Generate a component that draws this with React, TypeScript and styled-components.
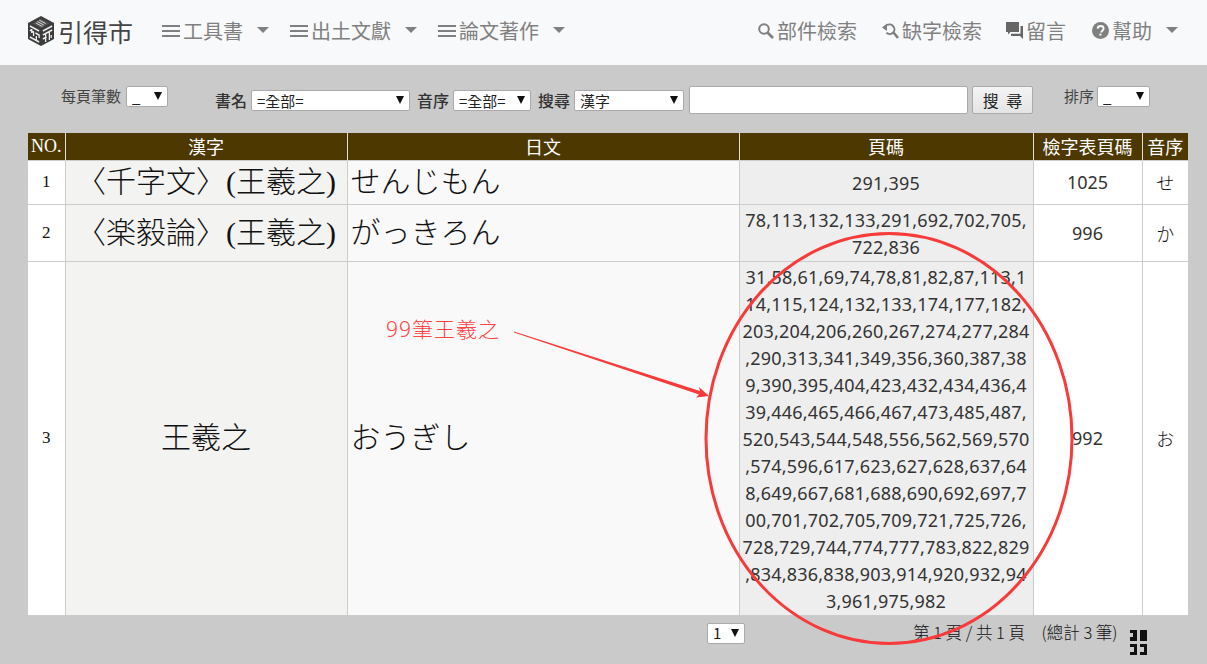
import styled, { createGlobalStyle } from "styled-components";

const GlobalStyle = createGlobalStyle`
	html, body {
		margin: 0;
		padding: 0;
		height: 664px;
		overflow: hidden;
		background: #cacaca;
		font-family: "Noto Sans CJK TC", "Liberation Serif", serif;
		text-spacing-trim: space-all;
	}
`;

const Page = styled.div`
	position: relative;
	width: 1207px;
	height: 664px;
`;

const Navbar = styled.nav`
	display: flex;
	align-items: center;
	height: 65px;
	padding: 0 29px 4px 28px;
	box-sizing: border-box;
	background: #f8f9fa;
`;

const Brand = styled.a`
	display: flex;
	align-items: center;
	gap: 4px;
	margin-right: 29px;
	font-size: 25px;
	color: #444;
`;

const NavItem = styled.a<{ $gap?: number }>`
	display: flex;
	align-items: center;
	gap: 3px;
	margin-right: ${(p) => p.$gap ?? 21}px;
	font-size: 20px;
	line-height: 30px;
	color: #808080;
`;

const NavRight = styled.div`
	display: flex;
	align-items: center;
	margin-left: auto;
`;

const Caret = styled.span`
	width: 0;
	height: 0;
	margin: 0 0 2px 11px;
	border-top: 6px solid #808080;
	border-left: 6px solid transparent;
	border-right: 6px solid transparent;
`;

const FilterBar = styled.form`
	display: flex;
	align-items: flex-start;
	height: 68px;
	padding: 21px 0 0 61px;
	box-sizing: border-box;
`;

const SmallLabel = styled.label<{ $left?: number; $right: number }>`
	margin: 0 ${(p) => p.$right}px 0 ${(p) => p.$left ?? 0}px;
	font-size: 15px;
	line-height: 20px;
	color: #444;
`;

const Label = styled.label<{ $left?: number }>`
	margin: 0 4px 0 ${(p) => p.$left ?? 7}px;
	font-size: 16px;
	line-height: 28px;
	font-weight: 500;
	color: #333;
`;

const SelectBox = styled.div<{ $w: number; $top?: number }>`
	position: relative;
	flex: none;
	width: ${(p) => p.$w}px;
	height: 21px;
	margin-top: ${(p) => p.$top ?? 0}px;
`;

const Select = styled.select`
	display: block;
	appearance: none;
	width: 100%;
	height: 100%;
	padding: 0 0 0 5px;
	box-sizing: border-box;
	background: #fff;
	border: 1px solid #aaa;
	border-radius: 2px;
	font-family: "Noto Sans CJK TC", "Liberation Sans", sans-serif;
	font-size: 15px;
	line-height: 18px;
	color: #222;
`;

const Arrow = styled.span`
	position: absolute;
	top: 6px;
	right: 6px;
	width: 0;
	height: 0;
	border-top: 8px solid #111;
	border-left: 4px solid transparent;
	border-right: 4px solid transparent;
	pointer-events: none;
`;

const TextInput = styled.input`
	width: 279px;
	height: 28px;
	margin: 0 4px 0 5px;
	box-sizing: border-box;
	background: #fff;
	border: 1px solid #aaa;
	border-radius: 2px;
`;

const SearchButton = styled.button`
	width: 61px;
	height: 28px;
	padding: 0;
	box-sizing: border-box;
	background: linear-gradient(#f4f4f4, #e4e4e4);
	border: 1px solid #aaa;
	border-radius: 2px;
	font-family: inherit;
	font-size: 16px;
	word-spacing: 4px;
	color: #222;
`;

const TableWrap = styled.div`
	padding-left: 28px;
`;

const Table = styled.table`
	width: 1160px;
	table-layout: fixed;
	border-collapse: collapse;
	background: #fff;
`;

const Th = styled.th<{ $serif?: boolean }>`
	height: 27px;
	padding: 0;
	box-sizing: border-box;
	background: #4d3800;
	border-left: 1px solid #ddd;
	font-family: ${(p) => (p.$serif ? '"Liberation Serif", serif' : "inherit")};
	font-size: 18px;
	font-weight: 400;
	color: #fff;
	text-align: center;
	&:first-child {
		border-left: none;
	}
`;

const Row = styled.tr<{ $h: number }>`
	height: ${(p) => p.$h}px;
`;

const Td = styled.td<{ $bg?: string }>`
	padding: 0;
	background: ${(p) => p.$bg ?? "#fff"};
	border: 1px solid #ccc;
	text-align: center;
	vertical-align: middle;
	color: #111;
`;

const NoCell = styled(Td)`
	font-family: "Liberation Serif", serif;
	font-size: 17px;
	border-left: none;
`;

const TitleCell = styled(Td)`
	font-family: "Liberation Serif", "Noto Sans CJK TC", serif;
	font-size: 30px;
	line-height: 40px;
	font-weight: 300;
	white-space: nowrap;
`;

const KanaCell = styled(TitleCell)`
	padding-left: 3px;
	text-align: left;
`;

const PagesCell = styled(Td)`
	padding-top: 2px;
	font-family: "Noto Sans", sans-serif;
	font-size: 18px;
	line-height: 27px;
	letter-spacing: 0.2px;
	color: #333;
`;

const PageLine = styled.div`
	white-space: nowrap;
`;

const IndexCell = styled(Td)`
	font-family: "Noto Sans", sans-serif;
	font-size: 18px;
	color: #333;
`;

const OrderCell = styled(Td)`
	font-size: 18px;
	font-weight: 300;
	border-right: none;
`;

const Pager = styled.div`
	display: flex;
	align-items: flex-start;
	padding: 7px 0 0 707px;
`;

const PageTotal = styled.div`
	width: 205px;
	margin: -2px 12px 0 168px;
	font-size: 16.500px;
	line-height: 22px;
	font-weight: 300;
	color: #111;
	white-space: pre;
`;

const PagerIcon = styled.svg`
	flex: none;
	margin-top: 7px;
`;

const Annotation = styled.svg`
	position: absolute;
	top: 0;
	left: 0;
	pointer-events: none;
`;

const Note = styled.div`
	position: absolute;
	top: 314px;
	left: 386px;
	font-family: "Noto Sans", "Noto Sans CJK TC", sans-serif;
	font-size: 21px;
	line-height: 30px;
	font-weight: 300;
	letter-spacing: 1px;
	color: #f44;
`;

const Hamburger = () => (
	<svg width="18" height="14" viewBox="0 0 18 14">
		<path d="M0 2h18M0 7h18M0 12h18" stroke="#808080" strokeWidth="2" />
	</svg>
);

const SearchIcon = () => (
	<svg width="17" height="17" viewBox="0 0 17 17" fill="none" stroke="#808080">
		<circle cx="7" cy="7" r="4.8" strokeWidth="2" />
		<path d="M10.5 10.5L16 16" strokeWidth="2.6" />
	</svg>
);

const SearchBackIcon = () => (
	<svg width="17" height="17" viewBox="0 0 17 17" fill="none" stroke="#808080">
		<path d="M5 3.200A4.800 4.800 0 1 1 4.400 10.800" strokeWidth="2" />
		<path d="M11.500 10.500L16 16" strokeWidth="2.600" />
		<path d="M0 5.500L5 1.500V9z" fill="#808080" stroke="none" />
	</svg>
);

const ChatIcon = () => (
	<svg width="17" height="17" viewBox="0 0 17 17" fill="#666">
		<path d="M0 0h13v10H4.500L2 12.500V10H0z" />
		<path d="M14.500 4H17v13l-3-3H5v-2.200h9.500z" />
	</svg>
);

const HelpIcon = () => (
	<svg width="17" height="17" viewBox="0 0 17 17">
		<circle cx="8.500" cy="8.500" r="8.500" fill="#808080" />
		<path d="M5.600 6.600C5.800 4.800 7 4 8.600 4c1.700 0 3 1 3 2.500 0 2.300-2.300 2.200-2.300 4" fill="none" stroke="#f8f9fa" strokeWidth="1.900" />
		<rect x="7.400" y="11.600" width="2" height="2" fill="#f8f9fa" />
	</svg>
);

const LogoIcon = () => (
	<svg width="26" height="30" viewBox="0 0 28 30" preserveAspectRatio="none">
		<path d="M14 0L28 7V23L14 30L0 23V7z" fill="#3c3c3c" />
		<path d="M14 3L23 7.500L14 12L5 7.500z" fill="#555" />
		<path d="M10 5.500l7 3.500M8.500 7l7 3.500M12 4l7 3.500" stroke="#ddd" strokeWidth="1" />
		<path d="M2 10l10 5M2 14l4 2v4M8 17l4 2v3M2 21l10 5M4 13v4M9 20v5" stroke="#eee" strokeWidth="1.400" fill="none" />
		<path d="M16 15l10-5M16 19l10-5M19 17v9M23 15v9M16 23l4-2M25 19v3" stroke="#eee" strokeWidth="1.400" fill="none" />
	</svg>
);

const GridIcon = () => (
	<PagerIcon width="17" height="25" viewBox="0 0 17 25" fill="#111">
		<path d="M0 0h7v11H0V7h3V3H0z" />
		<rect x="10" y="0" width="7" height="11" />
		<path d="M0 14h7v11H0v-3h4v-5H0z" />
		<path d="M10 14h7v11h-7v-3h4v-5h-4z" />
	</PagerIcon>
);

const pageLines = [
	"31,58,61,69,74,78,81,82,87,113,1",
	"14,115,124,132,133,174,177,182,",
	"203,204,206,260,267,274,277,284",
	",290,313,341,349,356,360,387,38",
	"9,390,395,404,423,432,434,436,4",
	"39,446,465,466,467,473,485,487,",
	"520,543,544,548,556,562,569,570",
	",574,596,617,623,627,628,637,64",
	"8,649,667,681,688,690,692,697,7",
	"00,701,702,705,709,721,725,726,",
	"728,729,744,774,777,783,822,829",
	",834,836,838,903,914,920,932,94",
	"3,961,975,982",
];

const rows = [
	{ no: 1, title: "〈千字文〉(王羲之)", kana: "せんじもん", pages: ["291,395"], index: "1025", order: "せ", height: 44 },
	{ no: 2, title: "〈楽毅論〉(王羲之)", kana: "がっきろん", pages: ["78,113,132,133,291,692,702,705,", "722,836"], index: "996", order: "か", height: 57 },
	{ no: 3, title: "王羲之", kana: "おうぎし", pages: pageLines, index: "992", order: "お", height: 354 },
];

const FilterSelect = ({ w, top, value }: { w: number; top?: number; value: string }) => (
	<SelectBox $w={w} $top={top}>
		<Select defaultValue={value}>
			<option value={value}>{value}</option>
		</Select>
		<Arrow />
	</SelectBox>
);

export default function App() {
	return (
		<Page>
			<GlobalStyle />
			<Navbar>
				<Brand>
					<LogoIcon />
					引得市
				</Brand>
				<NavItem><Hamburger />工具書<Caret /></NavItem>
				<NavItem><Hamburger />出土文獻<Caret /></NavItem>
				<NavItem><Hamburger />論文著作<Caret /></NavItem>
				<NavRight>
					<NavItem $gap={25}><SearchIcon />部件檢索</NavItem>
					<NavItem $gap={24}><SearchBackIcon />缺字檢索</NavItem>
					<NavItem $gap={26}><ChatIcon />留言</NavItem>
					<NavItem $gap={0}><HelpIcon />幫助<Caret /></NavItem>
				</NavRight>
			</Navbar>
			<FilterBar>
				<SmallLabel $right={5}>每頁筆數</SmallLabel>
				<FilterSelect w={42} value="_" />
				<Label $left={47}>書名</Label>
				<FilterSelect w={159} top={4} value="=全部=" />
				<Label>音序</Label>
				<FilterSelect w={78} top={4} value="=全部=" />
				<Label>搜尋</Label>
				<FilterSelect w={110} top={4} value="漢字" />
				<TextInput type="text" />
				<SearchButton type="button">搜 尋</SearchButton>
				<SmallLabel $left={31} $right={3}>排序</SmallLabel>
				<FilterSelect w={53} value="_" />
			</FilterBar>
			<TableWrap>
				<Table>
					<colgroup>
						<col width={37} />
						<col width={282} />
						<col width={392} />
						<col width={294} />
						<col width={109} />
						<col width={46} />
					</colgroup>
					<thead>
						<tr>
							<Th $serif>NO.</Th>
							<Th>漢字</Th>
							<Th>日文</Th>
							<Th>頁碼</Th>
							<Th>檢字表頁碼</Th>
							<Th>音序</Th>
						</tr>
					</thead>
					<tbody>
						{rows.map((r) => (
							<Row key={r.no} $h={r.height}>
								<NoCell>{r.no}</NoCell>
								<TitleCell $bg="#f3f3f1">{r.title}</TitleCell>
								<KanaCell $bg="#f9f9f9">{r.kana}</KanaCell>
								<PagesCell $bg="#eee">
									{r.pages.map((line) => <PageLine key={line}>{line}</PageLine>)}
								</PagesCell>
								<IndexCell>{r.index}</IndexCell>
								<OrderCell>{r.order}</OrderCell>
							</Row>
						))}
					</tbody>
				</Table>
			</TableWrap>
			<Pager>
				<FilterSelect w={38} value="1" />
				<PageTotal>第 1 頁 / 共 1 頁　(總計 3 筆)</PageTotal>
				<GridIcon />
			</Pager>
			<Annotation width="1207" height="664" viewBox="0 0 1207 664">
				<ellipse cx="889" cy="438.500" rx="183" ry="205" fill="none" stroke="#f73b3b" strokeWidth="3" />
				<path d="M514 331.500L700 391L699 387L709 396L696 397.500L699 394.500L514 332.500z" fill="#f73b3b" />
			</Annotation>
			<Note>99筆王羲之</Note>
		</Page>
	);
}
